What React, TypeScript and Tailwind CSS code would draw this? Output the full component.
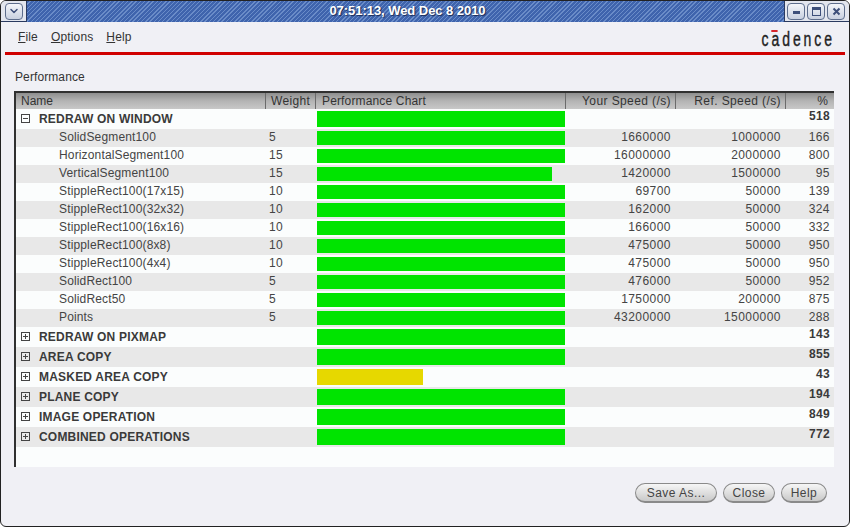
import { ChevronDown } from "lucide-react";
import type { ReactNode } from "react";

const font = "font-['Liberation_Sans',Arial,sans-serif]";

const children = [
  ["SolidSegment100", "5", 248, "1660000", "1000000", "166"],
  ["HorizontalSegment100", "15", 248, "16000000", "2000000", "800"],
  ["VerticalSegment100", "15", 235, "1420000", "1500000", "95"],
  ["StippleRect100(17x15)", "10", 248, "69700", "50000", "139"],
  ["StippleRect100(32x32)", "10", 248, "162000", "50000", "324"],
  ["StippleRect100(16x16)", "10", 248, "166000", "50000", "332"],
  ["StippleRect100(8x8)", "10", 248, "475000", "50000", "950"],
  ["StippleRect100(4x4)", "10", 248, "475000", "50000", "950"],
  ["SolidRect100", "5", 248, "476000", "50000", "952"],
  ["SolidRect50", "5", 248, "1750000", "200000", "875"],
  ["Points", "5", 248, "43200000", "15000000", "288"],
] as const;

const groups = [
  ["REDRAW ON PIXMAP", 248, "143"],
  ["AREA COPY", 248, "855"],
  ["MASKED AREA COPY", 106, "43"],
  ["PLANE COPY", 248, "194"],
  ["IMAGE OPERATION", 248, "849"],
  ["COMBINED OPERATIONS", 248, "772"],
] as const;

const HeadCell = ({ className, children }: { className: string; children: ReactNode }) => (
  <div className={`flex h-full shrink-0 items-center border-r border-[#6b6b6b] ${className}`}>
    {children}
  </div>
);

const Bar = ({ width, height }: { width: number; height: string }) => (
  <div className="flex w-[250px] shrink-0 items-center pl-[1px]">
    <div className={`${height} ${width < 200 ? "bg-[#e6d800]" : "bg-[#00e400]"}`} style={{ width }} />
  </div>
);

const TreeBox = ({ open }: { open?: boolean }) => (
  <svg width="9" height="9" viewBox="0 0 9 9" className="shrink-0">
    <rect x="0.5" y="0.5" width="8" height="8" fill="none" stroke="#444" />
    <path d={open ? "M2 4.5h5" : "M2 4.5h5M4.5 2v5"} stroke="#444" />
  </svg>
);

const GroupRow = ({
  name,
  width,
  pct,
  odd,
  open,
}: {
  name: string;
  width: number;
  pct: string;
  odd: boolean;
  open?: boolean;
}) => (
  <div className={`flex h-[20px] shrink-0 ${odd ? "bg-[#e8e8e8]" : "bg-[#fbfdfd]"}`}>
    <div className="flex w-[300px] shrink-0 items-center gap-[9px] pb-[1px] pl-[5px] text-[12px] font-bold tracking-[0.2px] text-[#3a3a3a]">
      <TreeBox open={open} />
      {name}
    </div>
    <Bar width={width} height="h-[16px]" />
    <div className="flex-1 pr-[4px] text-right text-[12px] font-bold leading-[15px] tracking-[0.3px] text-[#3a3a3a]">
      {pct}
    </div>
  </div>
);

const WinButton = ({ children }: { children: ReactNode }) => (
  <div className="flex h-[17px] w-[18px] items-center justify-center rounded-[4px] border border-[#5d6d8c] bg-gradient-to-b from-[#f4f6fa] to-[#c8d0e0]">
    {children}
  </div>
);

const Button = ({ label, className }: { label: string; className: string }) => (
  <div
    className={`flex h-[20px] items-center justify-center rounded-[10px] border border-b-[2px] border-[#8a8a8a] bg-gradient-to-b from-[#f6f6f6] to-[#c9c9c9] text-[12px] tracking-[0.45px] text-[#444] ${className}`}
  >
    {label}
  </div>
);

export default function App() {
  return (
    <div
      className={`flex h-[527px] w-[850px] flex-col overflow-hidden rounded-[6px] border border-[#222] bg-[#f0f0f5] ${font}`}
    >
      <div className="flex h-[21px] shrink-0 items-center border-b border-[#2a3a60] bg-[#e3e6ee] pl-[4px]">
        <div className="flex h-[17px] w-[18px] items-center justify-center rounded-[4px] border border-[#5d6d8c] bg-gradient-to-b from-[#f4f6fa] to-[#c8d0e0]">
          <ChevronDown size={12} strokeWidth={3} className="text-[#3d4f7a]" />
        </div>
        <div className="ml-[3px] flex h-[21px] flex-1 items-center justify-center border-x border-[#2a3a60] bg-[repeating-linear-gradient(135deg,#3f64ad_0px,#3f64ad_2px,#6a8cc8_2px,#6a8cc8_3px)] pl-[4px] text-[13px] font-bold tracking-[-0.05px] text-white [text-shadow:1px_1px_1px_#1a2a55]">
          07:51:13, Wed Dec 8 2010
        </div>
        <div className="flex w-[64px] shrink-0 justify-end gap-[2px] pr-[4px]">
          <WinButton>
            <div className="mt-[3px] h-[3px] w-[7px] bg-[#3d4f7a]" />
          </WinButton>
          <WinButton>
            <div className="h-[9px] w-[9px] border border-t-[3px] border-[#3d4f7a]" />
          </WinButton>
          <WinButton>
            <svg width="9" height="9" viewBox="0 0 9 9">
              <path d="M1.5 1.5l6 6M7.5 1.5l-6 6" stroke="#3d4f7a" strokeWidth="2" />
            </svg>
          </WinButton>
        </div>
      </div>

      <div className="flex h-[30px] shrink-0 items-center pl-[17px] pr-[15px] text-[12px] tracking-[0.15px] text-[#333]">
        <div className="flex gap-[13px]">
          <span>
            <span className="underline">F</span>ile
          </span>
          <span>
            <span className="underline">O</span>ptions
          </span>
          <span>
            <span className="underline">H</span>elp
          </span>
        </div>
        <div className="relative ml-auto mr-[-1px] mt-[4px] origin-right scale-x-[0.7] text-[20px] leading-[18px] tracking-[4.2px] text-[#222] [-webkit-text-stroke:0.4px_#222]">
          cadence
          <div className="absolute left-[14px] top-[0px] h-[2px] w-[9px] bg-[#d8262c]" />
        </div>
      </div>

      <div className="mx-[4px] h-[3px] shrink-0 bg-[#d00000]" />

      <div className="shrink-0 pl-[14px] pt-[15px] text-[12px] leading-[15px] tracking-[0.1px] text-[#333]">
        Performance
      </div>

      <div className="ml-[13px] mt-[6px] flex h-[376px] w-[820px] shrink-0 flex-col border-l-2 border-t-2 border-[#303030] bg-[#fbfdfd] text-[12px] text-[#444]">
        <div className="flex h-[16px] shrink-0 items-center bg-gradient-to-b from-[#8e8e8e] via-[#b4b4b4] to-[#c8c8c8] text-[#333]">
          <HeadCell className="w-[250px] pl-[5px]">Name</HeadCell>
          <HeadCell className="w-[50px] pl-[5px] tracking-[0.35px]">Weight</HeadCell>
          <HeadCell className="w-[250px] pl-[6px] tracking-[0.15px]">Performance Chart</HeadCell>
          <HeadCell className="w-[110px] justify-end pr-[4px] tracking-[0.4px]">Your Speed (/s)</HeadCell>
          <HeadCell className="w-[110px] justify-end pr-[4px] tracking-[0.4px]">Ref. Speed (/s)</HeadCell>
          <div className="flex-1 pr-[6px] text-right">%</div>
        </div>

        <GroupRow name="REDRAW ON WINDOW" width={248} pct="518" odd={false} open />

        {children.map(([name, weight, width, yours, ref, pct], i) => (
          <div
            key={name}
            className={`flex h-[18px] shrink-0 ${i % 2 === 0 ? "bg-[#e8e8e8]" : "bg-[#fbfdfd]"}`}
          >
            <div className="flex w-[250px] shrink-0 items-center pb-[2px] pl-[43px] tracking-[0.15px]">{name}</div>
            <div className="flex w-[50px] shrink-0 items-center pb-[2px] pl-[3px] tracking-[0.45px]">{weight}</div>
            <Bar width={width} height="h-[14px]" />
            <div className="flex w-[110px] shrink-0 items-center justify-end pb-[2px] pr-[5px] tracking-[0.45px]">{yours}</div>
            <div className="flex w-[110px] shrink-0 items-center justify-end pb-[2px] pr-[5px] tracking-[0.45px]">{ref}</div>
            <div className="flex flex-1 items-center justify-end pb-[2px] pr-[4px] tracking-[0.45px]">{pct}</div>
          </div>
        ))}

        {groups.map(([name, width, pct], i) => (
          <GroupRow key={name} name={name} width={width} pct={pct} odd={i % 2 === 1} />
        ))}
      </div>

      <div className="mt-[16px] flex justify-end gap-[6px] pr-[22px]">
        <Button label="Save As..." className="w-[82px]" />
        <Button label="Close" className="w-[52px]" />
        <Button label="Help" className="w-[46px]" />
      </div>
    </div>
  );
}
